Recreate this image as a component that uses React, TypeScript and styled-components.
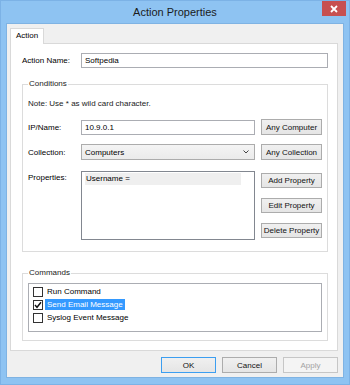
import React from "react";
import styled, { createGlobalStyle } from "styled-components";

const GlobalStyle = createGlobalStyle`
  html, body {
    margin: 0;
    padding: 0;
    background: #ffffff;
  }
  body {
    font-family: "Liberation Sans", Arial, sans-serif;
    font-size: 8px;
    color: #000;
  }
  * {
    box-sizing: border-box;
  }
`;

const commands = [
  { name: "Run Command", checked: false, selected: false },
  { name: "Send Email Message", checked: true, selected: true },
  { name: "Syslog Event Message", checked: false, selected: false }
];

export default function App() {
  return (
    <>
      <GlobalStyle />
      <Window>
        <TitleBar>
          <Title>Action Properties</Title>
          <CloseButton>
            <svg width="8" height="8" viewBox="0 0 8 8">
              <path d="M1 1 L7 7 M7 1 L1 7" stroke="#fff" strokeWidth="1.8" />
            </svg>
          </CloseButton>
        </TitleBar>
        <Client>
          <TabStrip>
            <Tab>Action</Tab>
          </TabStrip>
          <Panel>
            <NameRow>
              <Label>Action Name:</Label>
              <TextBox defaultValue="Softpedia" />
            </NameRow>

            <Group $top={11} $bottom={11}>
              <Legend>Conditions</Legend>
              <Note>Note: Use * as wild card character.</Note>
              <FieldRow $top={10}>
                <Label>IP/Name:</Label>
                <TextBox defaultValue="10.9.0.1" />
                <Button>Any Computer</Button>
              </FieldRow>
              <FieldRow $top={9}>
                <Label>Collection:</Label>
                <Select>
                  <span>Computers</span>
                  <svg width="6" height="4" viewBox="0 0 6 4">
                    <path d="M0.5 0.5 L3 3 L5.5 0.5" stroke="#444" strokeWidth="1" fill="none" />
                  </svg>
                </Select>
                <Button>Any Collection</Button>
              </FieldRow>
              <FieldRow $top={11} $align="start">
                <TopLabel>Properties:</TopLabel>
                <PropList>
                  <PropItem>Username =</PropItem>
                </PropList>
                <ButtonStack>
                  <Button>Add Property</Button>
                  <Button>Edit Property</Button>
                  <Button>Delete Property</Button>
                </ButtonStack>
              </FieldRow>
            </Group>

            <Group $top={16} $bottom={8}>
              <Legend>Commands</Legend>
              <CheckList>
                {commands.map(c => (
                  <CheckRow key={c.name}>
                    <CheckBox>
                      {c.checked && (
                        <svg width="8" height="8" viewBox="0 0 8 8">
                          <path d="M1 4 L3 6.3 L7 1.2" stroke="#111" strokeWidth="1.4" fill="none" />
                        </svg>
                      )}
                    </CheckBox>
                    <CheckText $selected={c.selected}>{c.name}</CheckText>
                  </CheckRow>
                ))}
              </CheckList>
            </Group>
          </Panel>

          <ButtonBar>
            <DialogButton $default>OK</DialogButton>
            <DialogButton>Cancel</DialogButton>
            <DialogButton $disabled>Apply</DialogButton>
          </ButtonBar>
        </Client>
      </Window>
    </>
  );
}

const Window = styled.div`
  width: 350px;
  height: 385px;
  background: #8ec3f2;
  border: 1px solid #7cb2e6;
  display: flex;
  flex-direction: column;
`;

const TitleBar = styled.div`
  height: 22px;
  display: grid;
  grid-template-columns: 1fr auto 1fr;
  align-items: start;
`;

const Title = styled.div`
  grid-column: 2;
  font-size: 11px;
  line-height: 22px;
  color: #1b1b1b;
`;

const CloseButton = styled.div`
  grid-column: 3;
  justify-self: end;
  width: 24px;
  height: 15px;
  margin-right: 3px;
  background: #c75050;
  display: flex;
  align-items: center;
  justify-content: center;
`;

const Client = styled.div`
  flex: 1;
  margin: 0 5px 6px 5px;
  background: #f0f0f0;
  border: 1px solid #7fb3e3;
  padding: 4px 5px 4px 3px;
  display: flex;
  flex-direction: column;
`;

const TabStrip = styled.div`
  display: flex;
  height: 15px;
`;

const Tab = styled.div`
  height: 16px;
  padding: 0 5px;
  line-height: 14px;
  background: #ffffff;
  border: 1px solid #d9d9d9;
  border-bottom: none;
  position: relative;
  z-index: 1;
`;

const Panel = styled.div`
  flex: 1;
  background: #ffffff;
  border: 1px solid #d9d9d9;
  padding: 9px 9px 0 11px;
  display: flex;
  flex-direction: column;
`;

const NameRow = styled.div`
  display: grid;
  grid-template-columns: 59px 1fr;
  align-items: center;
`;

const Label = styled.span`
  white-space: nowrap;
`;

const TopLabel = styled(Label)`
  padding-top: 2px;
`;

const TextBox = styled.input`
  height: 15px;
  width: 100%;
  border: 1px solid #abadb3;
  background: #fff;
  padding: 0 3px;
  font-family: inherit;
  font-size: 8px;
  color: #000;
  outline: none;
`;

const Group = styled.fieldset<{ $top: number; $bottom: number }>`
  margin: ${p => p.$top}px 0 0 0;
  padding: 0 5px ${p => p.$bottom}px 5px;
  border: 1px solid #dcdcdc;
  min-width: 0;
`;

const Legend = styled.legend`
  padding: 0 1px;
  line-height: 10px;
  color: #1a1a1a;
`;

const Note = styled.div`
  margin-top: 10px;
  line-height: 10px;
  color: #1a1a1a;
`;

const FieldRow = styled.div<{ $top: number; $align?: string }>`
  margin-top: ${p => p.$top}px;
  display: grid;
  grid-template-columns: 47px 174px 61px;
  column-gap: 6px;
  align-items: ${p => p.$align || "center"};
`;

const Button = styled.div`
  height: 16px;
  border: 1px solid #acacac;
  background: linear-gradient(#f0f0f0, #e5e5e5);
  display: flex;
  align-items: center;
  justify-content: center;
  white-space: nowrap;
  color: #111;
`;

const Select = styled.div`
  height: 16px;
  border: 1px solid #acacac;
  background: linear-gradient(#f4f4f4, #ebebeb);
  padding: 0 5px 0 3px;
  display: flex;
  align-items: center;
  justify-content: space-between;
`;

const PropList = styled.div`
  height: 69px;
  border: 1px solid #828790;
  background: #fff;
  padding: 1px 13px 0 3px;
`;

const PropItem = styled.div`
  height: 12px;
  line-height: 12px;
  padding-left: 1px;
  background: #efefef;
`;

const ButtonStack = styled.div`
  display: flex;
  flex-direction: column;
  gap: 10px;
  padding-top: 2px;

  & > div {
    height: 15px;
  }
`;

const CheckList = styled.div`
  margin-top: 5px;
  height: 49px;
  border: 1px solid #abadb3;
  background: #fff;
  padding: 1px 4px 0 4px;
`;

const CheckRow = styled.div`
  height: 13px;
  display: flex;
  align-items: center;
  gap: 2px;
`;

const CheckBox = styled.div`
  width: 10px;
  height: 10px;
  border: 1px solid #333;
  background: #fff;
  display: flex;
  align-items: center;
  justify-content: center;
`;

const CheckText = styled.span<{ $selected?: boolean }>`
  line-height: 11px;
  padding: 0 2px;
  background: ${p => (p.$selected ? "#3399ff" : "transparent")};
  color: ${p => (p.$selected ? "#fff" : "#000")};
`;

const ButtonBar = styled.div`
  margin-top: 6px;
  display: flex;
  justify-content: flex-end;
  gap: 6px;
`;

const DialogButton = styled.div<{ $default?: boolean; $disabled?: boolean }>`
  width: 55px;
  height: 16px;
  display: flex;
  align-items: center;
  justify-content: center;
  border: 1px solid
    ${p => (p.$default ? "#3c9ef0" : p.$disabled ? "#c6c6c6" : "#acacac")};
  background: ${p =>
    p.$disabled ? "#f4f4f4" : "linear-gradient(#f0f0f0, #e5e5e5)"};
  color: ${p => (p.$disabled ? "#a3a3a3" : "#111")};
`;
